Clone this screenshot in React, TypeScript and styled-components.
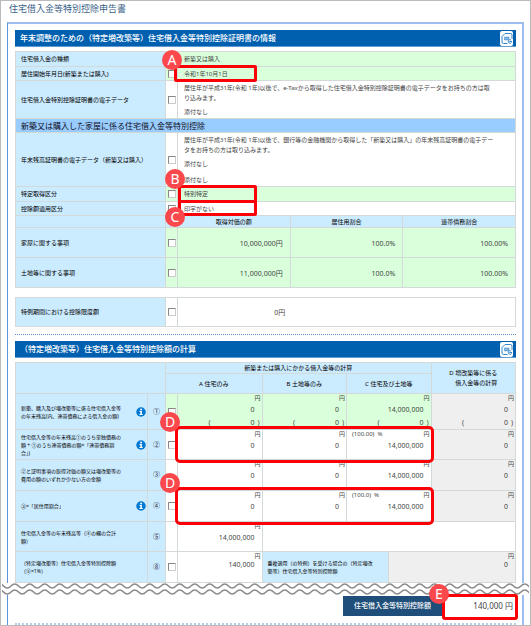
import React from "react";
import styled, { createGlobalStyle, css } from "styled-components";

const GlobalStyle = createGlobalStyle`
  *, *::before, *::after { box-sizing: border-box; }
  body {
    margin: 0;
    background: #fff;
    color: #444;
    font-family: "Noto Sans", "Noto Sans CJK JP", sans-serif;
    font-size: 6px;
    line-height: 8px;
  }
`;

type Tone = "blue" | "green" | "grey" | "white";

const tones: Record<Tone, string> = {
  blue: "#cbebff",
  green: "#d9ffdb",
  grey: "#efefef",
  white: "#fff",
};

const Page = styled.main`
  border: 1px solid #bbb;
  overflow: hidden;
`;

const Title = styled.h1`
  margin: 0;
  padding: 0 8px;
  height: 21px;
  font-size: 9px;
  line-height: 16px;
  font-weight: 400;
  color: #3a5f88;
`;

const Frame = styled.div`
  margin: 0 6px;
  padding: 6px 6px 0 7px;
  border: 2px solid #9dbdee;
  border-left: 1px solid #5b92d8;
  border-bottom: 0;
`;

const Bar = styled.header`
  display: flex;
  align-items: center;
  justify-content: space-between;
  height: 17px;
  padding: 0 3px 0 5px;
  margin-bottom: 4px;
  background: #0060b0;
  border-bottom: 1px solid #5f9bd2;
`;

const BarTitle = styled.h2`
  margin: 0;
  font-size: 8px;
  line-height: 14px;
  font-weight: 500;
  color: #fff;
`;

const BarButton = styled.button`
  display: grid;
  place-items: center;
  width: 13px;
  height: 15px;
  padding: 0;
  border: 0;
  border-radius: 2px;
  background: #fff;
`;

const Table = styled.table`
  width: 100%;
  table-layout: fixed;
  border-collapse: collapse;
`;

const SpacedTable = styled(Table)`
  margin-top: 9px;
`;

const Col = styled.col<{ $w?: number }>`
  ${(p) => p.$w && css`width: ${p.$w}px;`}
`;

const Row = styled.tr<{ $h: number }>`
  height: ${(p) => p.$h}px;
`;

const cell = css<{ $tone?: Tone }>`
  padding: 0;
  border: 1px solid #d3d8d8;
  background: ${(p) => tones[p.$tone ?? "white"]};
`;

const Head = styled.th<{ $tone?: Tone; $indent?: number }>`
  ${cell}
  padding-left: ${(p) => p.$indent ?? 5}px;
  font-weight: 400;
  text-align: left;
  color: #000;
`;

const SmallHead = styled(Head)`
  font-size: 5px;
  padding-right: 1px;
`;

const ColumnHead = styled.th<{ $tone?: Tone }>`
  ${cell}
  font-weight: 400;
  line-height: 10px;
  text-align: center;
  color: #000;
`;

const HeadLines = styled.span`
  display: inline-block;
  text-align: right;
`;

const SectionHead = styled.th`
  ${cell}
  padding-left: 5px;
  background: #99ccff;
  font-size: 8px;
  line-height: 12px;
  font-weight: 400;
  text-align: left;
  color: #112;
`;

const LabelLine = styled.div`
  display: flex;
  align-items: center;
  justify-content: space-between;
`;

const Cell = styled.td<{ $tone?: Tone }>`
  ${cell}
  padding-left: 6px;
  position: relative;
`;

const TickCell = styled.td<{ $tone?: Tone }>`
  ${cell}
  text-align: center;
`;

const NumberCell = styled.td<{ $tone?: Tone }>`
  ${cell}
  text-align: center;
  font-size: 7px;
  color: #223;
`;

const ValueCell = styled.td<{ $tone?: Tone }>`
  ${cell}
  padding: 2px 7px 0 0;
  text-align: right;
  font-size: 7px;
`;

const AmountCell = styled.td<{ $tone?: Tone }>`
  ${cell}
  position: relative;
  vertical-align: top;
`;

const Limit = styled.div`
  width: 33%;
  padding: 2px 8px 0 0;
  font-size: 7px;
  text-align: right;
`;

const Tick = styled.input`
  appearance: none;
  display: block;
  width: 8px;
  height: 8px;
  margin: 0 auto;
  background: #fff;
  border: 1px solid #ccc;
  border-top-color: #888;
  border-left-color: #888;
  &:checked { background: #0060b0; }
`;

const Para = styled.p<{ $gap?: number }>`
  margin: ${(p) => p.$gap ?? 0}px 0 0;
  line-height: 10px;
`;

const UnitLine = styled.div`
  display: flex;
  justify-content: space-between;
  padding: 0 1px 0 5px;
  white-space: pre;
`;

const Amount = styled.div<{ $tight?: boolean }>`
  padding-right: 7px;
  font-size: 7px;
  line-height: ${(p) => (p.$tight ? 10 : 16)}px;
  text-align: right;
`;

const Bracket = styled.div`
  display: flex;
  justify-content: space-between;
  gap: 3px;
  width: 51px;
  margin: 0 2px 0 auto;
  font-size: 7px;
  line-height: 10px;
  & > :first-child { margin-right: auto; }
`;

const Dotted = styled.hr`
  height: 0;
  margin: 7px 0 6px;
  border: 0;
  border-top: 1px dotted #5b88cc;
`;

const EndDotted = styled(Dotted)`
  margin: 7px 0 0;
  border-top: 2px dotted #b5cdec;
`;

const Mark = styled.span<{ $box: string; $w: string; $r?: number }>`
  position: absolute;
  inset: ${(p) => p.$box};
  width: ${(p) => p.$w};
  border: 3px solid #fb0007;
  border-radius: ${(p) => p.$r ?? 2}px;
  z-index: 2;
  pointer-events: none;
`;

const Badge = styled.b<{ $x: number; $y: number }>`
  position: absolute;
  left: ${(p) => p.$x}px;
  top: ${(p) => p.$y}px;
  width: 20px;
  height: 20px;
  border-radius: 50%;
  background: #fb484c;
  color: #fff;
  font-size: 14px;
  line-height: 20px;
  font-weight: 400;
  text-align: center;
  z-index: 3;
`;

const Tear = styled.div`
  position: relative;
  z-index: 1;
  height: 12px;
  margin: 0 -13px 0 -13px;
  background: #fff;
  overflow: hidden;
  & > svg { display: block; width: 100%; height: 12px; }
`;

const Total = styled.dl`
  display: flex;
  justify-content: flex-end;
  margin: 1px 0 0;
`;

const TotalLabel = styled.dt`
  width: 99px;
  padding-left: 11px;
  background: #1e4e79;
  color: #fff;
  font-size: 7px;
  line-height: 20px;
  font-weight: 500;
`;

const TotalValue = styled.dd`
  position: relative;
  width: 74px;
  margin: 0;
  padding-right: 3px;
  font-size: 8px;
  line-height: 20px;
  text-align: right;
`;

const InfoIcon = () => (
  <svg width="10" height="10" viewBox="0 0 20 20" aria-label="説明" role="img">
    <circle cx="10" cy="10" r="9.5" fill="#0078d4" />
    <circle cx="10.2" cy="5" r="1.9" fill="#fff" />
    <path d="M7 8.2h4.8v6h1.6V16H6.8v-1.8h1.8V10H7z" fill="#fff" />
  </svg>
);

const FormIcon = () => (
  <svg width="12" height="13" viewBox="0 0 24 26" fill="none" stroke="#2f86cc" aria-hidden="true">
    <path d="M8 3H19a3 3 0 0 1 3 3V14M13 23H5a3 3 0 0 1-3-3V9L8 3" strokeWidth="2" />
    <path d="M7 10h9v6H7z" fill="#2f86cc" fillOpacity="0.6" strokeWidth="1" />
    <path d="M20 16a3.500 3.500 0 1 0 1 5M17 19h5" strokeWidth="2" />
  </svg>
);

const WAVE_PERIOD = 15;
const wave = (y: number) =>
  `M-6 ${y}` + Array.from({ length: 200 }, () => `q${WAVE_PERIOD / 4} -4 ${WAVE_PERIOD / 2} 0t${WAVE_PERIOD / 2} 0`).join("");

const TearLine = () => (
  <Tear>
    <svg aria-hidden="true" fill="none" stroke="#8c8c8c" strokeWidth="1.500">
      <path d={wave(3)} />
      <path d={wave(9)} />
    </svg>
  </Tear>
);

const SectionBar = ({ children }: { children: React.ReactNode }) => (
  <Bar>
    <BarTitle>{children}</BarTitle>
    <BarButton type="button" aria-label="帳票表示">
      <FormIcon />
    </BarButton>
  </Bar>
);

const LabelledTick = ({ id, label, tone }: { id: string; label: string; tone?: Tone }) => (
  <>
    <Head scope="row" $tone="blue">
      <label htmlFor={id}>{label}</label>
    </Head>
    <TickCell $tone={tone}>
      <Tick type="checkbox" id={id} />
    </TickCell>
  </>
);

const AmountBox = (p: {
  value: string;
  tone?: Tone;
  rate?: string;
  bracket?: boolean;
  tight?: boolean;
  span?: number;
  children?: React.ReactNode;
}) => (
  <AmountCell $tone={p.tone} colSpan={p.span ?? 2}>
    <UnitLine>
      <span>{p.rate ?? ""}</span>
      <span>円</span>
    </UnitLine>
    <Amount $tight={p.tight}>{p.value}</Amount>
    {p.bracket && (
      <Bracket>
        <span>(</span>
        <span>0</span>
        <span>)</span>
      </Bracket>
    )}
    {p.children}
  </AmountCell>
);

type CalcRow = {
  no: string;
  lines: string[];
  height: number;
  info?: boolean;
  tick?: boolean;
  tone?: Tone;
  rate?: string;
  bracket?: boolean;
  mark?: boolean;
};

const calcRows: CalcRow[] = [
  {
    no: "①",
    lines: ["新築、購入及び増改築等に係る住宅借入金等", "の年末残高(内、連帯債務による借入金の額)"],
    height: 36, info: true, tick: true, tone: "green", bracket: true,
  },
  {
    no: "②",
    lines: ["住宅借入金等の年末残高①のうち単独債務の", "額 + ①のうち連帯債務の額×「連帯債務割", "合」)"],
    height: 30, info: true, tick: true, rate: "(100.00)  %", mark: true,
  },
  {
    no: "③",
    lines: ["②と証明事項の取得対価の額又は増改築等の", "費用の額のいずれか少ない方の金額"],
    height: 31,
  },
  { no: "④", lines: ["③×「居住用割合」"], height: 31, info: true, tick: true, rate: "(100.0)  %", mark: true },
];

const Lines = ({ lines }: { lines: string[] }) => (
  <>
    {lines.map((line, i) => (
      <React.Fragment key={line}>
        {i > 0 && <br />}
        {line}
      </React.Fragment>
    ))}
  </>
);

export default function App() {
  return (
    <>
      <GlobalStyle />
      <Page lang="ja">
        <Title>住宅借入金等特別控除申告書</Title>
        <Frame>
          <SectionBar>年末調整のための（特定増改築等）住宅借入金等特別控除証明書の情報</SectionBar>
          <Table>
            <colgroup>
              <Col $w={150} />
              <Col $w={12} />
              <Col />
              <Col />
              <Col />
            </colgroup>
            <tbody>
              <Row $h={15}>
                <Head scope="row" $tone="blue">住宅借入金の種類</Head>
                <TickCell $tone="green" />
                <Cell colSpan={3} $tone="green">新築又は購入</Cell>
              </Row>
              <Row $h={14}>
                <LabelledTick id="start" label="居住開始年月日(新築または購入)" tone="green" />
                <Cell colSpan={3} $tone="green">
                  令和1年10月1日
                  <Mark $box="-2px auto -2px -4px" $w="83px">
                    <Badge $x={-15} $y={-18}>A</Badge>
                  </Mark>
                </Cell>
              </Row>
              <Row $h={38}>
                <LabelledTick id="certificate" label="住宅借入金特別控除証明書の電子データ" />
                <Cell colSpan={3}>
                  <Para>
                    居住年が平成31年(令和 1年)以後で、e-Taxから取得した住宅借入金特別控除証明書の電子データをお持ちの方は取
                    <br />
                    り込みます。
                  </Para>
                  <Para $gap={4}>添付なし</Para>
                </Cell>
              </Row>
              <Row $h={14}>
                <SectionHead colSpan={5}>新築又は購入した家屋に係る住宅借入金等特別控除</SectionHead>
              </Row>
              <Row $h={54}>
                <LabelledTick id="balance" label="年末残高証明書の電子データ（新築又は購入）" />
                <Cell colSpan={3}>
                  <Para>
                    居住年が平成31年(令和 1年)以後で、銀行等の金融機関から取得した「新築又は購入」の年末残高証明書の電子デー
                    <br />
                    タをお持ちの方は取り込みます。
                  </Para>
                  <Para $gap={4}>添付なし</Para>
                  <Para $gap={6}>添付なし</Para>
                </Cell>
              </Row>
              <Row $h={15}>
                <LabelledTick id="acquisition" label="特定取得区分" tone="green" />
                <Cell colSpan={3} $tone="green">
                  特別特定
                  <Mark $box="-2px auto -2px 0" $w="79px">
                    <Badge $x={-16} $y={-19}>B</Badge>
                  </Mark>
                </Cell>
              </Row>
              <Row $h={14}>
                <LabelledTick id="deduction" label="控除額適用区分" />
                <Cell colSpan={3}>
                  印字がない
                  <Mark $box="-2px auto -1px 0" $w="79px">
                    <Badge $x={-16} $y={4}>C</Badge>
                  </Mark>
                </Cell>
              </Row>
              <Row $h={12}>
                <Head $tone="blue" />
                <TickCell $tone="blue" />
                <ColumnHead scope="col" $tone="blue">取得対価の額</ColumnHead>
                <ColumnHead scope="col" $tone="blue">居住用割合</ColumnHead>
                <ColumnHead scope="col" $tone="blue">連帯債務割合</ColumnHead>
              </Row>
              <Row $h={30}>
                <LabelledTick id="house" label="家屋に関する事項" tone="green" />
                <ValueCell $tone="green">10,000,000円</ValueCell>
                <ValueCell $tone="green">100.0%</ValueCell>
                <ValueCell $tone="green">100.00%</ValueCell>
              </Row>
              <Row $h={30}>
                <LabelledTick id="land" label="土地等に関する事項" tone="green" />
                <ValueCell $tone="green">11,000,000円</ValueCell>
                <ValueCell $tone="green">100.0%</ValueCell>
                <ValueCell $tone="green">100.00%</ValueCell>
              </Row>
            </tbody>
          </Table>

          <SpacedTable>
            <colgroup>
              <Col $w={150} />
              <Col $w={12} />
              <Col />
            </colgroup>
            <tbody>
              <Row $h={29}>
                <LabelledTick id="limit" label="特例期間における控除限度額" />
                <Cell>
                  <Limit>0円</Limit>
                </Cell>
              </Row>
            </tbody>
          </SpacedTable>

          <Dotted />

          <SectionBar>（特定増改築等）住宅借入金等特別控除額の計算</SectionBar>
          <Table>
            <colgroup>
              <Col $w={132} />
              <Col $w={18} />
              <Col $w={12} />
              {Array.from({ length: 8 }, (_, i) => (
                <Col key={i} />
              ))}
            </colgroup>
            <thead>
              <Row $h={11}>
                <Head rowSpan={2} colSpan={2} $tone="blue" />
                <ColumnHead scope="colgroup" colSpan={7} $tone="blue">新築または購入にかかる借入金等の計算</ColumnHead>
                <ColumnHead scope="col" rowSpan={2} colSpan={2} $tone="blue">
                  <HeadLines>
                    D 増改築等に係る
                    <br />
                    借入金等の計算
                  </HeadLines>
                </ColumnHead>
              </Row>
              <Row $h={20}>
                <ColumnHead scope="col" colSpan={3} $tone="blue">A 住宅のみ</ColumnHead>
                <ColumnHead scope="col" colSpan={2} $tone="blue">B 土地等のみ</ColumnHead>
                <ColumnHead scope="col" colSpan={2} $tone="blue">C 住宅及び土地等</ColumnHead>
              </Row>
            </thead>
            <tbody>
              {calcRows.map((r) => (
                <Row key={r.no} $h={r.height}>
                  <SmallHead scope="row" $tone="blue">
                    <LabelLine>
                      {r.tick ? (
                        <label htmlFor={`calc-${r.no}`}>
                          <Lines lines={r.lines} />
                        </label>
                      ) : (
                        <span>
                          <Lines lines={r.lines} />
                        </span>
                      )}
                      {r.info && <InfoIcon />}
                    </LabelLine>
                  </SmallHead>
                  <NumberCell $tone="blue">{r.no}</NumberCell>
                  <TickCell $tone={r.tone}>{r.tick && <Tick type="checkbox" id={`calc-${r.no}`} />}</TickCell>
                  <AmountBox value="0" tone={r.tone} bracket={r.bracket}>
                    {r.mark && (
                      <Mark $box="-4px auto -4px -3px" $w="calc(300% + 8px)" $r={5}>
                        <Badge $x={-18} $y={-17}>D</Badge>
                      </Mark>
                    )}
                  </AmountBox>
                  <AmountBox value="0" tone={r.tone} bracket={r.bracket} />
                  <AmountBox value="14,000,000" tone={r.tone} bracket={r.bracket} rate={r.rate} />
                  <AmountBox value="0" tone="grey" bracket={r.bracket} />
                </Row>
              ))}
              <Row $h={30}>
                <SmallHead scope="row" $tone="blue">
                  <Lines lines={["住宅借入金等の年末残高等（④の欄の合計", "額）"]} />
                </SmallHead>
                <NumberCell $tone="blue">⑤</NumberCell>
                <TickCell />
                <AmountBox value="14,000,000" />
                <Cell colSpan={6} />
              </Row>
              <Row $h={31}>
                <SmallHead scope="row" $tone="blue">
                  <label htmlFor="calc-8">
                    <Lines lines={["（特定増改築等）住宅借入金等特別控除額", "（⑤×1%）"]} />
                  </label>
                </SmallHead>
                <NumberCell $tone="blue">⑧</NumberCell>
                <TickCell>
                  <Tick type="checkbox" id="calc-8" />
                </TickCell>
                <AmountBox value="140,000" tight />
                <SmallHead scope="row" colSpan={3} $tone="blue">
                  <Lines lines={["重複適用（の特例）を受ける場合の（特定増改", "築等）住宅借入金等特別控除額"]} />
                </SmallHead>
                <AmountBox value="0" tone="grey" tight span={3} />
              </Row>
            </tbody>
          </Table>

          <TearLine />

          <Total>
            <TotalLabel>住宅借入金等特別控除額</TotalLabel>
            <TotalValue>
              140,000 円
              <Mark $box="-2px auto -4px 0" $w="76px" $r={3}>
                <Badge $x={-16} $y={-13}>E</Badge>
              </Mark>
            </TotalValue>
          </Total>
          <EndDotted />
        </Frame>
      </Page>
    </>
  );
}
